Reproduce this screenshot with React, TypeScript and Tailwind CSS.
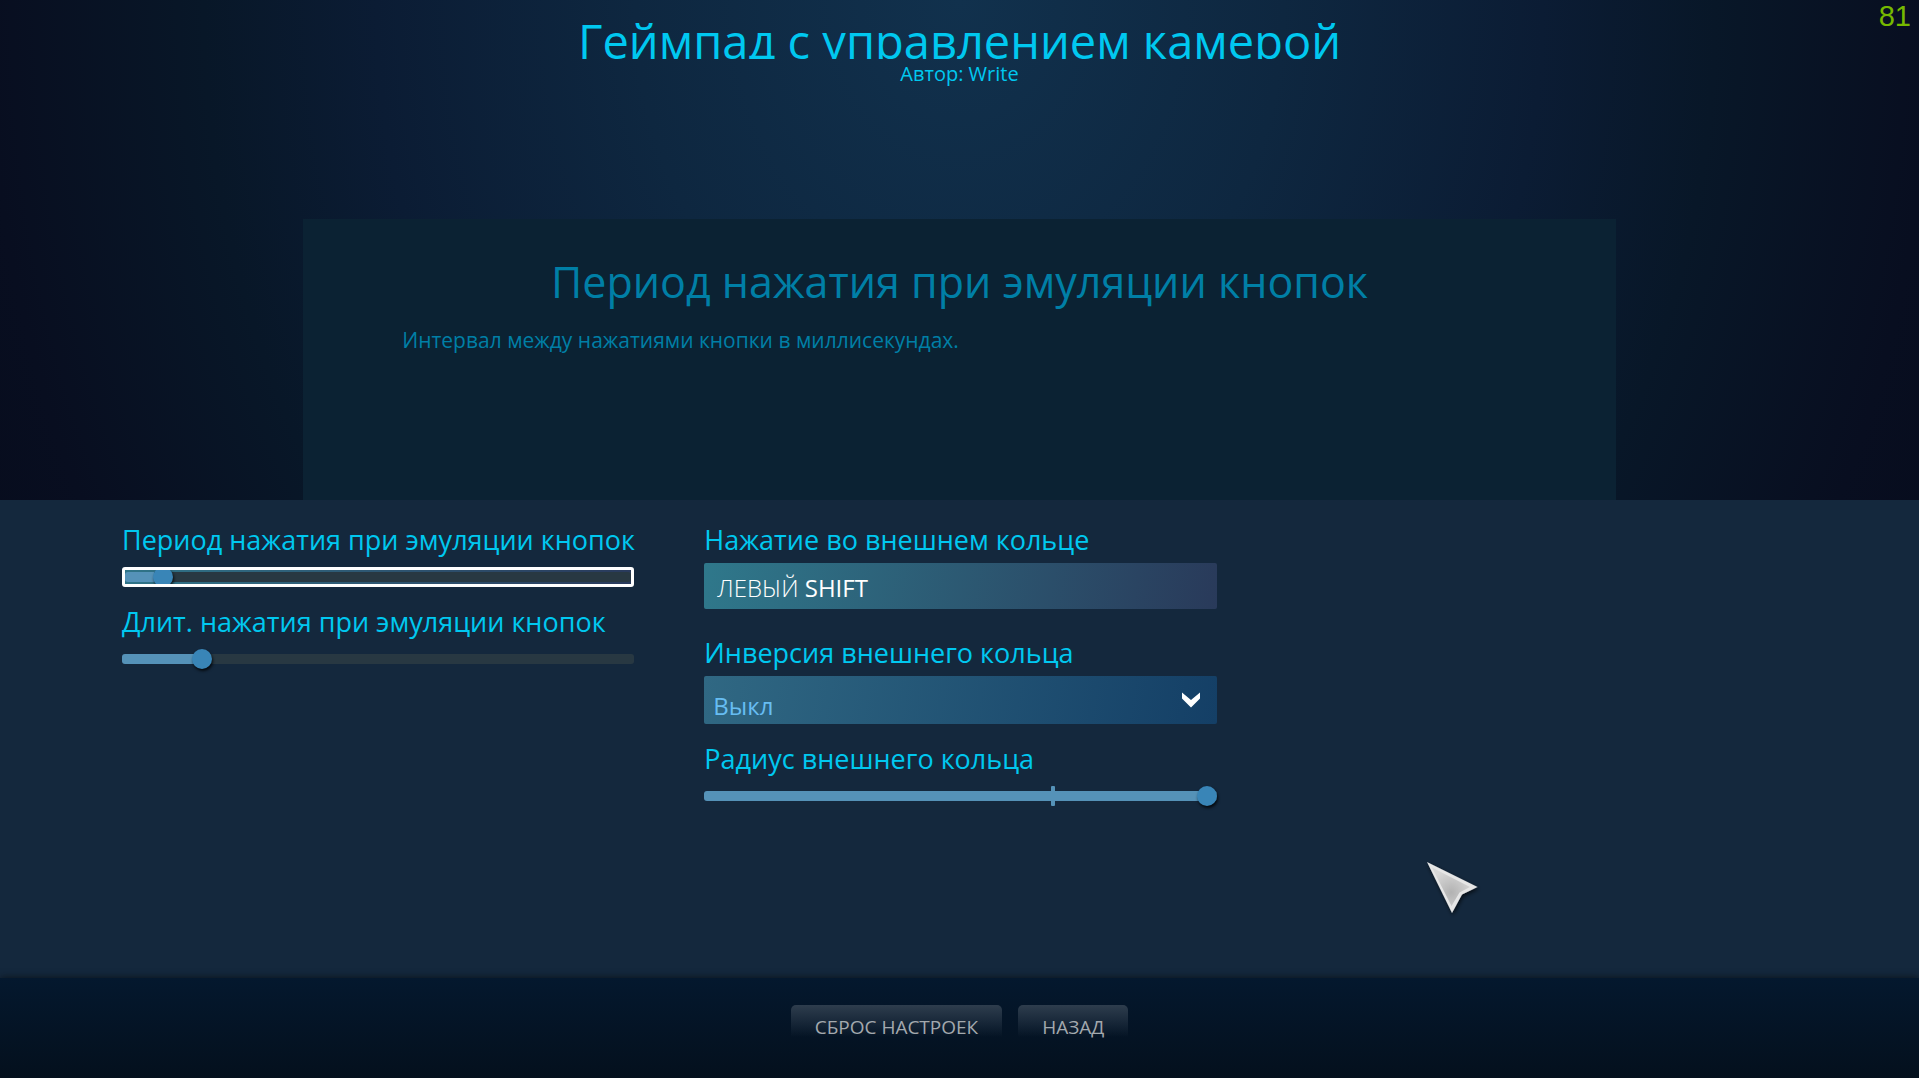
import { useState, type CSSProperties } from "react";

type SliderProps = {
  id: string;
  label: string;
  initial: number;
  focused?: boolean;
  mark?: number;
};

const labelClass = "block text-[27px] leading-[38px] whitespace-nowrap text-[#00c8f0]";

function Slider({ id, label, initial, focused = false, mark }: SliderProps) {
  const [value, setValue] = useState(initial);
  const vars = { "--fill": `${value / 10}%` } as CSSProperties;
  return (
    <div>
      <label htmlFor={id} className={labelClass}>
        {label}
      </label>
      <div
        className={
          focused
            ? "relative mt-2 flex h-5 items-center overflow-hidden rounded-[3px] border-[3px] border-white bg-linear-to-r from-[#2f7488] to-[#293a5c]"
            : "relative mt-2 flex h-5 items-center"
        }
      >
        <input
          id={id}
          type="range"
          min={0}
          max={1000}
          value={value}
          onChange={(e) => setValue(Number(e.target.value))}
          style={vars}
          className="block h-5 w-full shrink-0 cursor-pointer appearance-none bg-transparent outline-none [&::-webkit-slider-runnable-track]:h-[10px] [&::-webkit-slider-runnable-track]:rounded-[3px] [&::-webkit-slider-runnable-track]:bg-[linear-gradient(to_right,#5592b8_var(--fill),#283842_var(--fill))] [&::-webkit-slider-thumb]:-mt-[5px] [&::-webkit-slider-thumb]:size-5 [&::-webkit-slider-thumb]:appearance-none [&::-webkit-slider-thumb]:rounded-full [&::-webkit-slider-thumb]:bg-[#3985b7] [&::-webkit-slider-thumb]:shadow-[1px_2px_3px_#000000cc]"
        />
        {mark !== undefined && (
          <span
            className="pointer-events-none absolute inset-y-0 w-1 rounded-[1px] bg-[#5592b8]"
            style={{ left: `${mark}%` }}
          />
        )}
      </div>
    </div>
  );
}

function FooterButton({ children }: { children: string }) {
  return (
    <button
      type="button"
      className="h-8 rounded-t-[5px] bg-linear-to-b from-[#2e3d4d] to-[#2e3d4d00] px-6 pt-[10px] text-[19px] leading-6 text-[#a3a9ae]"
    >
      {children}
    </button>
  );
}

export default function App() {
  return (
    <div className="relative flex min-h-screen flex-col overflow-hidden bg-[#070c1d] bg-[radial-gradient(1080px_1300px_at_50%_0,#11314d_0%,#0e2740_30%,#0b1c34_54%,#081728_70%,#080e20_90%,#070c1d_100%)] font-['Open_Sans','Noto_Sans',sans-serif]">
      <header className="flex flex-col items-center pt-[9px] text-[#00c8f0]">
        <h1 className="h-[50px] overflow-hidden text-[47px] leading-[65px] whitespace-nowrap">
          Геймпад с управлением камерой
        </h1>
        <p className="text-[20px] leading-[30px]">Автор: Write</p>
      </header>

      <section className="mx-auto mt-[130px] min-h-[281px] w-[68.4%] bg-[#0b2233] px-[99px] pt-[33px] text-[#007fa6]">
        <h2 className="text-center text-[43px] leading-[60px] whitespace-nowrap">
          Период нажатия при эмуляции кнопок
        </h2>
        <p className="mt-3 text-[21px] leading-8">
          Интервал между нажатиями кнопки в миллисекундах.
        </p>
      </section>

      <main className="grid flex-1 grid-cols-3 items-start gap-x-[70px] bg-[#14283d] pt-[21px] pr-[120px] pl-[122px]">
        <div className="flex flex-col gap-4">
          <Slider id="period" label="Период нажатия при эмуляции кнопок" initial={58} focused />
          <Slider id="duration" label="Длит. нажатия при эмуляции кнопок" initial={142} />
        </div>
        <div className="flex flex-col">
          <span id="ring-key" className={labelClass}>
            Нажатие во внешнем кольце
          </span>
          <button
            type="button"
            aria-labelledby="ring-key ring-value"
            className="mt-1 h-[46px] rounded-[2px] bg-[linear-gradient(100deg,#2f788b,#293a5a)] px-[13px] pt-[3px] text-left text-[24px] leading-8 text-white"
          >
            <span id="ring-value">
              <span className="font-light">ЛЕВЫЙ</span> SHIFT
            </span>
          </button>

          <label htmlFor="invert" className={`${labelClass} mt-[25px]`}>
            Инверсия внешнего кольца
          </label>
          <div className="relative mt-1 grid">
            <select
              id="invert"
              className="h-12 w-full appearance-none rounded-[2px] bg-[linear-gradient(100deg,#306883,#143f66)] pt-3 pl-[9px] text-[24px] text-[#67bdf2] outline-none"
            >
              <option>Выкл</option>
              <option>Вкл</option>
            </select>
            <svg
              viewBox="0 0 18 16"
              aria-hidden="true"
              className="pointer-events-none absolute top-4 right-[17px] h-4 w-[18px]"
            >
              <path d="M0 0.5 9 8 18 0.5V6.5L9 15.5 0 6.5Z" fill="#fff" />
            </svg>
          </div>

          <div className="mt-4">
            <Slider id="radius" label="Радиус внешнего кольца" initial={1000} mark={67.7} />
          </div>
        </div>
      </main>

      <footer className="flex min-h-[100px] justify-center gap-4 bg-linear-to-b from-[#04182e] to-[#04101d] pt-[27px] shadow-[0_0_7px_#0b1117]">
        <FooterButton>СБРОС НАСТРОЕК</FooterButton>
        <FooterButton>НАЗАД</FooterButton>
      </footer>

      <output className="absolute top-0 right-2 font-['Liberation_Sans',sans-serif] text-[29px] leading-8 text-[#76b900]">
        81
      </output>

      <svg
        viewBox="0 0 64 64"
        aria-hidden="true"
        className="pointer-events-none absolute top-[856px] left-[74%] size-16"
      >
        <defs>
          <radialGradient id="pointer-fill" cx="0.5" cy="0.65" r="0.6">
            <stop offset="0" stopColor="#b2b2b2" />
            <stop offset="1" stopColor="#d8d8d8" />
          </radialGradient>
          <filter id="pointer-shadow" x="-20%" y="-20%" width="150%" height="150%">
            <feDropShadow dx="1" dy="2" stdDeviation="2" floodColor="#000" floodOpacity="0.7" />
          </filter>
        </defs>
        <g filter="url(#pointer-shadow)">
          <path d="M7 6 57.500 31 42 38.500 32 57Z" fill="#e6e6e6" />
          <path d="M12 11.500 50 31 39.500 36.500 31.500 50Z" fill="url(#pointer-fill)" />
        </g>
      </svg>
    </div>
  );
}
